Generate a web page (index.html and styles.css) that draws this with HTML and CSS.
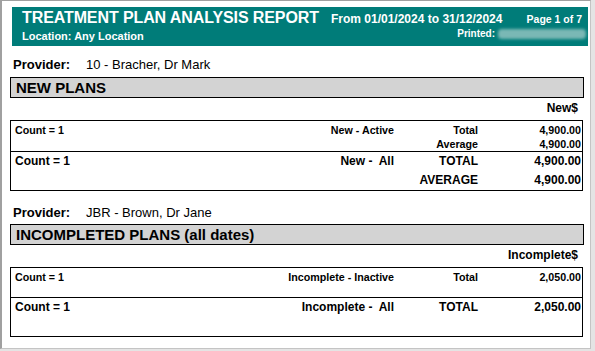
FILE: index.html
```html
<!DOCTYPE html>
<html>
<head>
<meta charset="utf-8">
<title>Treatment Plan Analysis Report</title>
<link rel="stylesheet" href="styles.css">
</head>
<body>
<div class="frame">
  <div class="header">
    <div class="hrow top">
      <div class="title">TREATMENT PLAN ANALYSIS REPORT</div>
      <div class="dates">From 01/01/2024 to 31/12/2024</div>
      <div class="page">Page 1 of 7</div>
    </div>
    <div class="hrow bottom">
      <div class="location">Location: Any Location</div>
      <div class="printed"><span>Printed:</span><span class="blur"></span></div>
    </div>
  </div>

  <div class="report">
    <div class="provider"><span class="plabel">Provider:</span><span>10 - Bracher, Dr Mark</span></div>
    <div class="bar">NEW PLANS</div>
    <div class="colhead">New$</div>
    <div class="box">
      <div class="row small">
        <span class="c1">Count = 1</span><span class="c2">New - Active</span><span class="c3">Total</span><span class="c4">4,900.00</span>
        <span class="c1"></span><span class="c2"></span><span class="c3">Average</span><span class="c4">4,900.00</span>
      </div>
      <div class="row big">
        <span class="c1">Count = 1</span><span class="c2">New -  All</span><span class="c3">TOTAL</span><span class="c4">4,900.00</span>
        <span class="c1"></span><span class="c2"></span><span class="c3">AVERAGE</span><span class="c4">4,900.00</span>
      </div>
    </div>

    <div class="provider second"><span class="plabel">Provider:</span><span>JBR - Brown, Dr Jane</span></div>
    <div class="bar">INCOMPLETED PLANS (all dates)</div>
    <div class="colhead">Incomplete$</div>
    <div class="box">
      <div class="row small">
        <span class="c1">Count = 1</span><span class="c2">Incomplete - Inactive</span><span class="c3">Total</span><span class="c4">2,050.00</span>
      </div>
      <div class="row big">
        <span class="c1">Count = 1</span><span class="c2">Incomplete -  All</span><span class="c3">TOTAL</span><span class="c4">2,050.00</span>
      </div>
    </div>
  </div>
</div>
</body>
</html>
```

FILE: styles.css
```css
html, body {
  margin: 0;
  padding: 0;
}
body {
  background: #e4e4e4;
  font-family: "Liberation Sans", Arial, sans-serif;
  color: #000;
  width: 595px;
  height: 351px;
  overflow: hidden;
}
.frame {
  width: 588px;
  height: 347px;
  background: #fff;
  border-top: 1px solid #a0a0a0;
  border-left: 2px solid #a0a0a0;
  border-right: 1px solid #c4c4c4;
  border-bottom: 1px solid #c4c4c4;
  overflow: hidden;
}
.header {
  margin: 6px 0 0 10px;
  width: 576px;
  height: 39px;
  box-sizing: border-box;
  background: #007c79;
  color: #fff;
  font-weight: bold;
  padding: 1px 2px 0 10px;
  display: flex;
  flex-direction: column;
}
.hrow {
  display: flex;
}
.hrow.top {
  align-items: baseline;
  height: 19px;
}
.hrow.bottom {
  align-items: flex-start;
  justify-content: space-between;
}
.title {
  flex: 0 0 309px;
  font-size: 16px;
  line-height: 19px;
  letter-spacing: -0.1px;
  white-space: nowrap;
}
.dates {
  font-size: 12px;
  line-height: 14px;
  white-space: nowrap;
}
.page {
  margin-left: auto;
  margin-right: 4px;
  font-size: 10.5px;
  line-height: 13px;
  white-space: nowrap;
}
.location {
  font-size: 11px;
  line-height: 13px;
  margin-top: 3px;
}
.printed {
  font-size: 10px;
  line-height: 14px;
  display: flex;
  align-items: center;
  gap: 3px;
}
.blur {
  display: inline-block;
  width: 88px;
  height: 10px;
  background: #7ab8b5;
  border-radius: 4px;
  filter: blur(1.5px);
}
.report {
  margin-left: 8px;
  width: 574px;
}
.provider {
  margin-top: 11px;
  padding-left: 3px;
  font-size: 13px;
  line-height: 16px;
  display: flex;
}
.provider.second {
  margin-top: 14px;
}
.plabel {
  font-weight: bold;
  width: 73px;
}
.bar {
  margin-top: 4px;
  height: 19px;
  background: #d3d3d3;
  border: 1px solid #000;
  font-size: 15px;
  line-height: 19px;
  font-weight: bold;
  padding-left: 5px;
}
.provider.second + .bar {
  margin-top: 3px;
}
.colhead {
  height: 22px;
  box-sizing: border-box;
  padding: 3px 6px 0 0;
  text-align: right;
  font-size: 12px;
  line-height: 14px;
  font-weight: bold;
}
.box {
  width: 573px;
  box-sizing: border-box;
  border: 1px solid #000;
}
.row {
  display: grid;
  grid-template-columns: 1fr 150px 84px 103px;
  padding: 0 1px 0 4px;
  font-weight: bold;
  white-space: pre;
}
.row .c2, .row .c3, .row .c4 {
  text-align: right;
}
.row.small {
  font-size: 10.7px;
  line-height: 14px;
  min-height: 30px;
  box-sizing: border-box;
  padding-top: 2px;
  border-bottom: 1px solid #000;
}
.row.big {
  font-size: 12px;
  line-height: 17px;
  min-height: 38px;
  box-sizing: border-box;
  padding-top: 1px;
}
```
